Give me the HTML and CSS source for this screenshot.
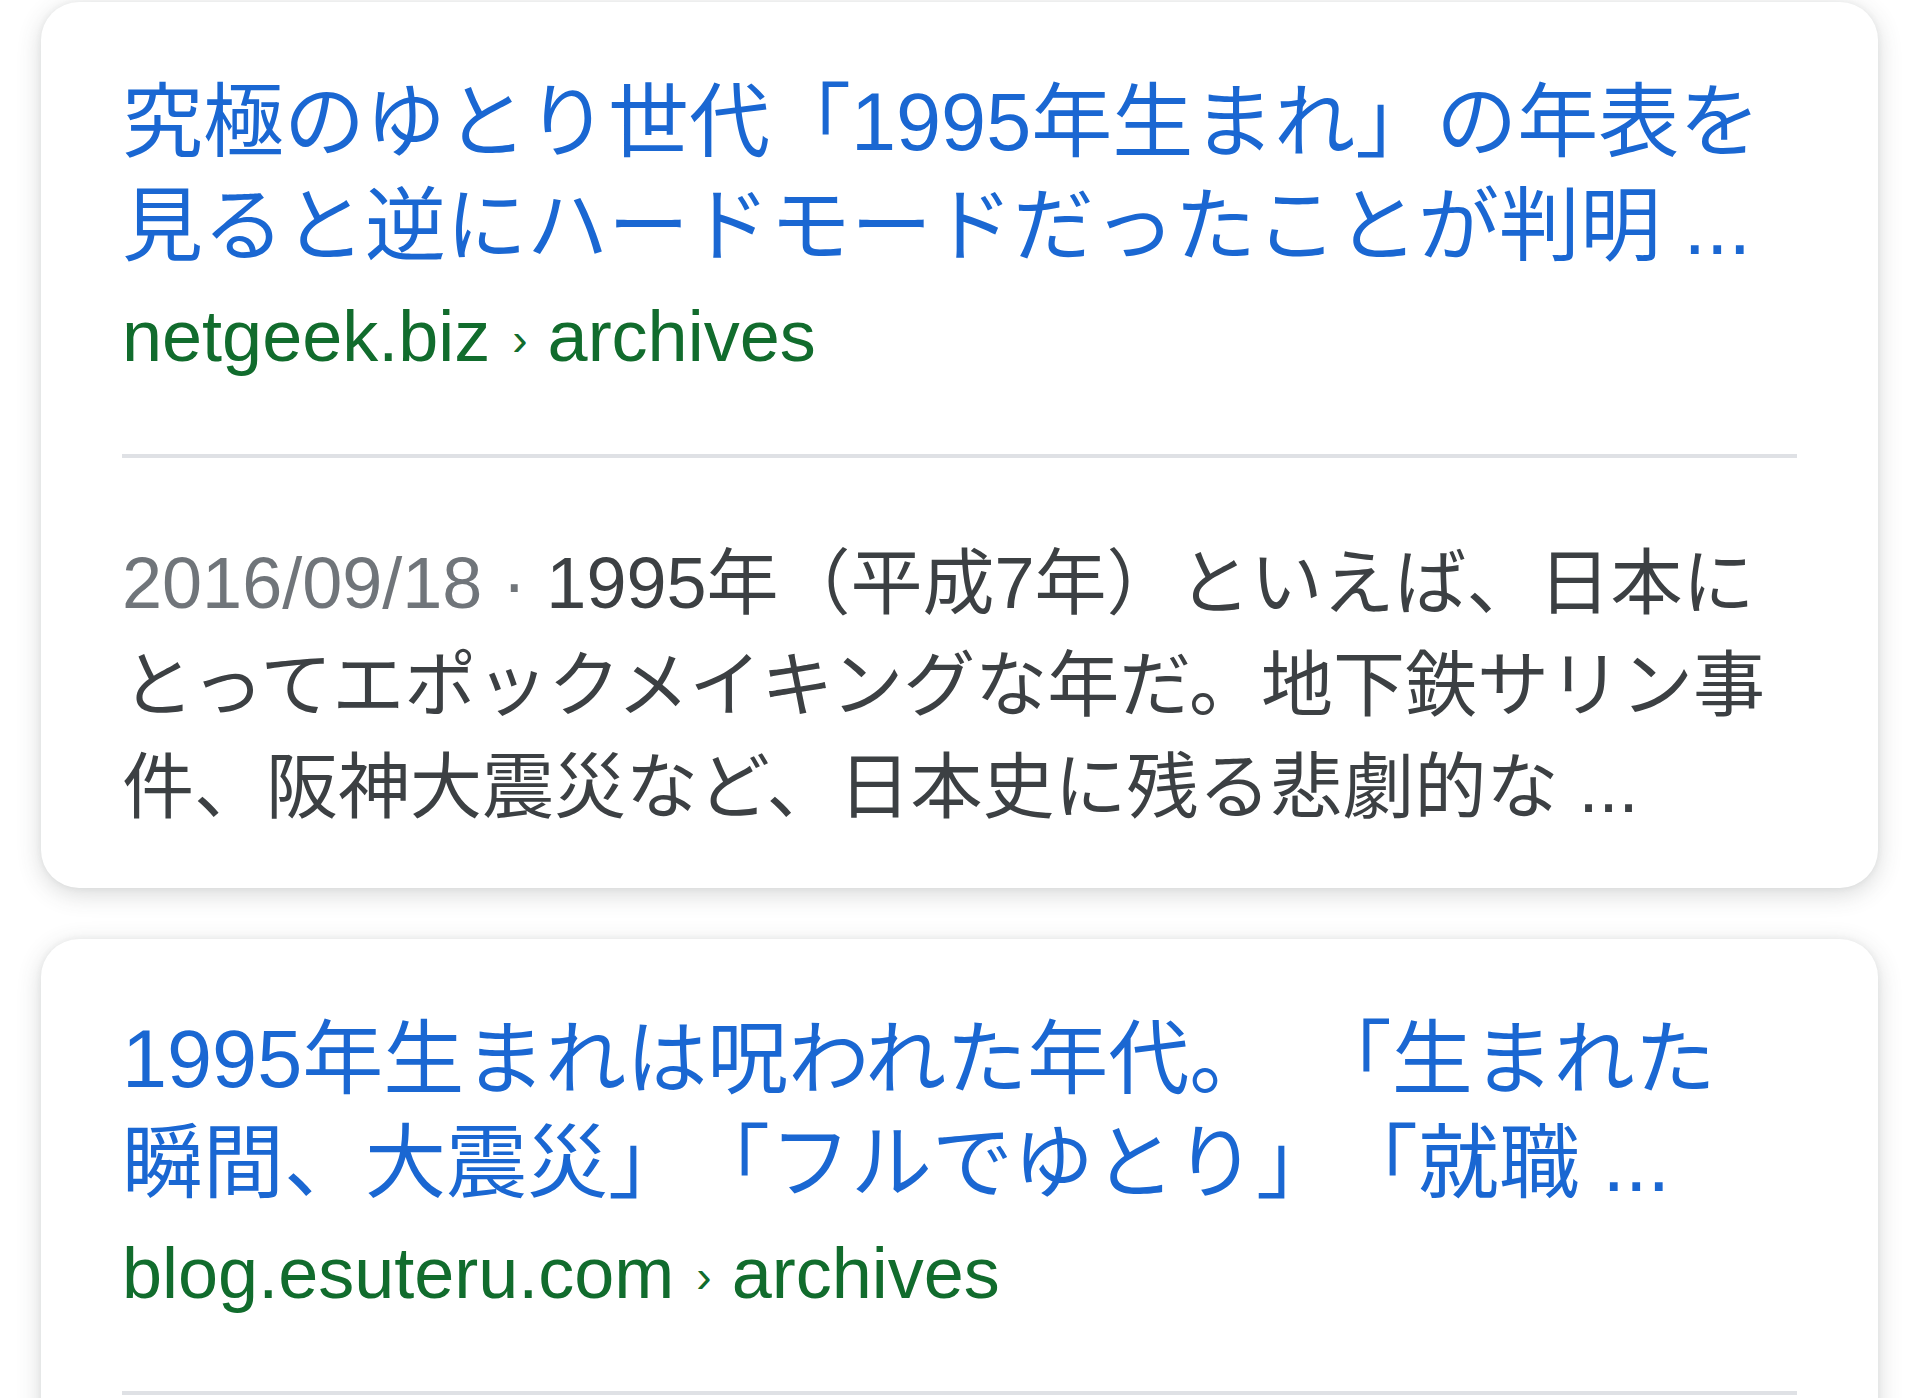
FILE: index.html
```html
<!DOCTYPE html>
<html lang="ja">
<head>
<meta charset="utf-8">
<title>検索結果</title>
<link rel="stylesheet" href="styles.css">
</head>
<body>
<main class="results">
  <article class="card">
    <a class="title" href="#">究極のゆとり世代「1995年生まれ」の年表を<br>見ると逆にハードモードだったことが判明 ...</a>
    <div class="url">netgeek.biz<span class="sep">›</span>archives</div>
    <hr class="divider">
    <p class="snippet"><span class="date">2016/09/18 · </span>1995年（平成7年）といえば、日本に<br>とってエポックメイキングな年だ。地下鉄サリン事<br>件、阪神大震災など、日本史に残る悲劇的な ...</p>
  </article>
  <article class="card card-cut">
    <a class="title" href="#">1995年生まれは呪われた年代。&#8194;「生まれた<br>瞬間、大震災」「フルでゆとり」「就職 ...</a>
    <div class="url">blog.esuteru.com<span class="sep">›</span>archives</div>
    <hr class="divider">
  </article>
</main>
</body>
</html>
```

FILE: styles.css
```css
html, body {
  margin: 0;
  padding: 0;
  background: #ffffff;
}

body {
  font-family: "Liberation Sans", "Noto Sans CJK JP", sans-serif;
  overflow: hidden;
}

.results {
  display: flex;
  flex-direction: column;
  gap: 51px;
  padding: 2px 42px 0 41px;
}

.card {
  background: #ffffff;
  border-radius: 38px;
  padding: 68px 81px 50px;
  box-shadow: 0 6px 24px rgba(60, 64, 67, 0.2), 0 0 6px rgba(60, 64, 67, 0.07);
}

.card-cut {
  padding-bottom: 400px;
}

.title {
  display: block;
  font-size: 81px;
  line-height: 104px;
  color: #1a67d2;
  text-decoration: none;
  white-space: nowrap;
  text-spacing-trim: space-all;
}

.url {
  margin-top: 10px;
  font-size: 72px;
  line-height: 96px;
  color: #116c2d;
  white-space: nowrap;
}

.sep {
  font-size: 46px;
  margin: 0 20px 0 22px;
  position: relative;
  top: -6px;
}

.divider {
  margin: 61px 0 0;
  border: 0;
  height: 4px;
  background: #dfe1e5;
}

.snippet {
  margin: 74px 0 0;
  font-size: 72px;
  line-height: 102px;
  color: #3c4043;
  white-space: nowrap;
}

.date {
  color: #70757a;
}
```
